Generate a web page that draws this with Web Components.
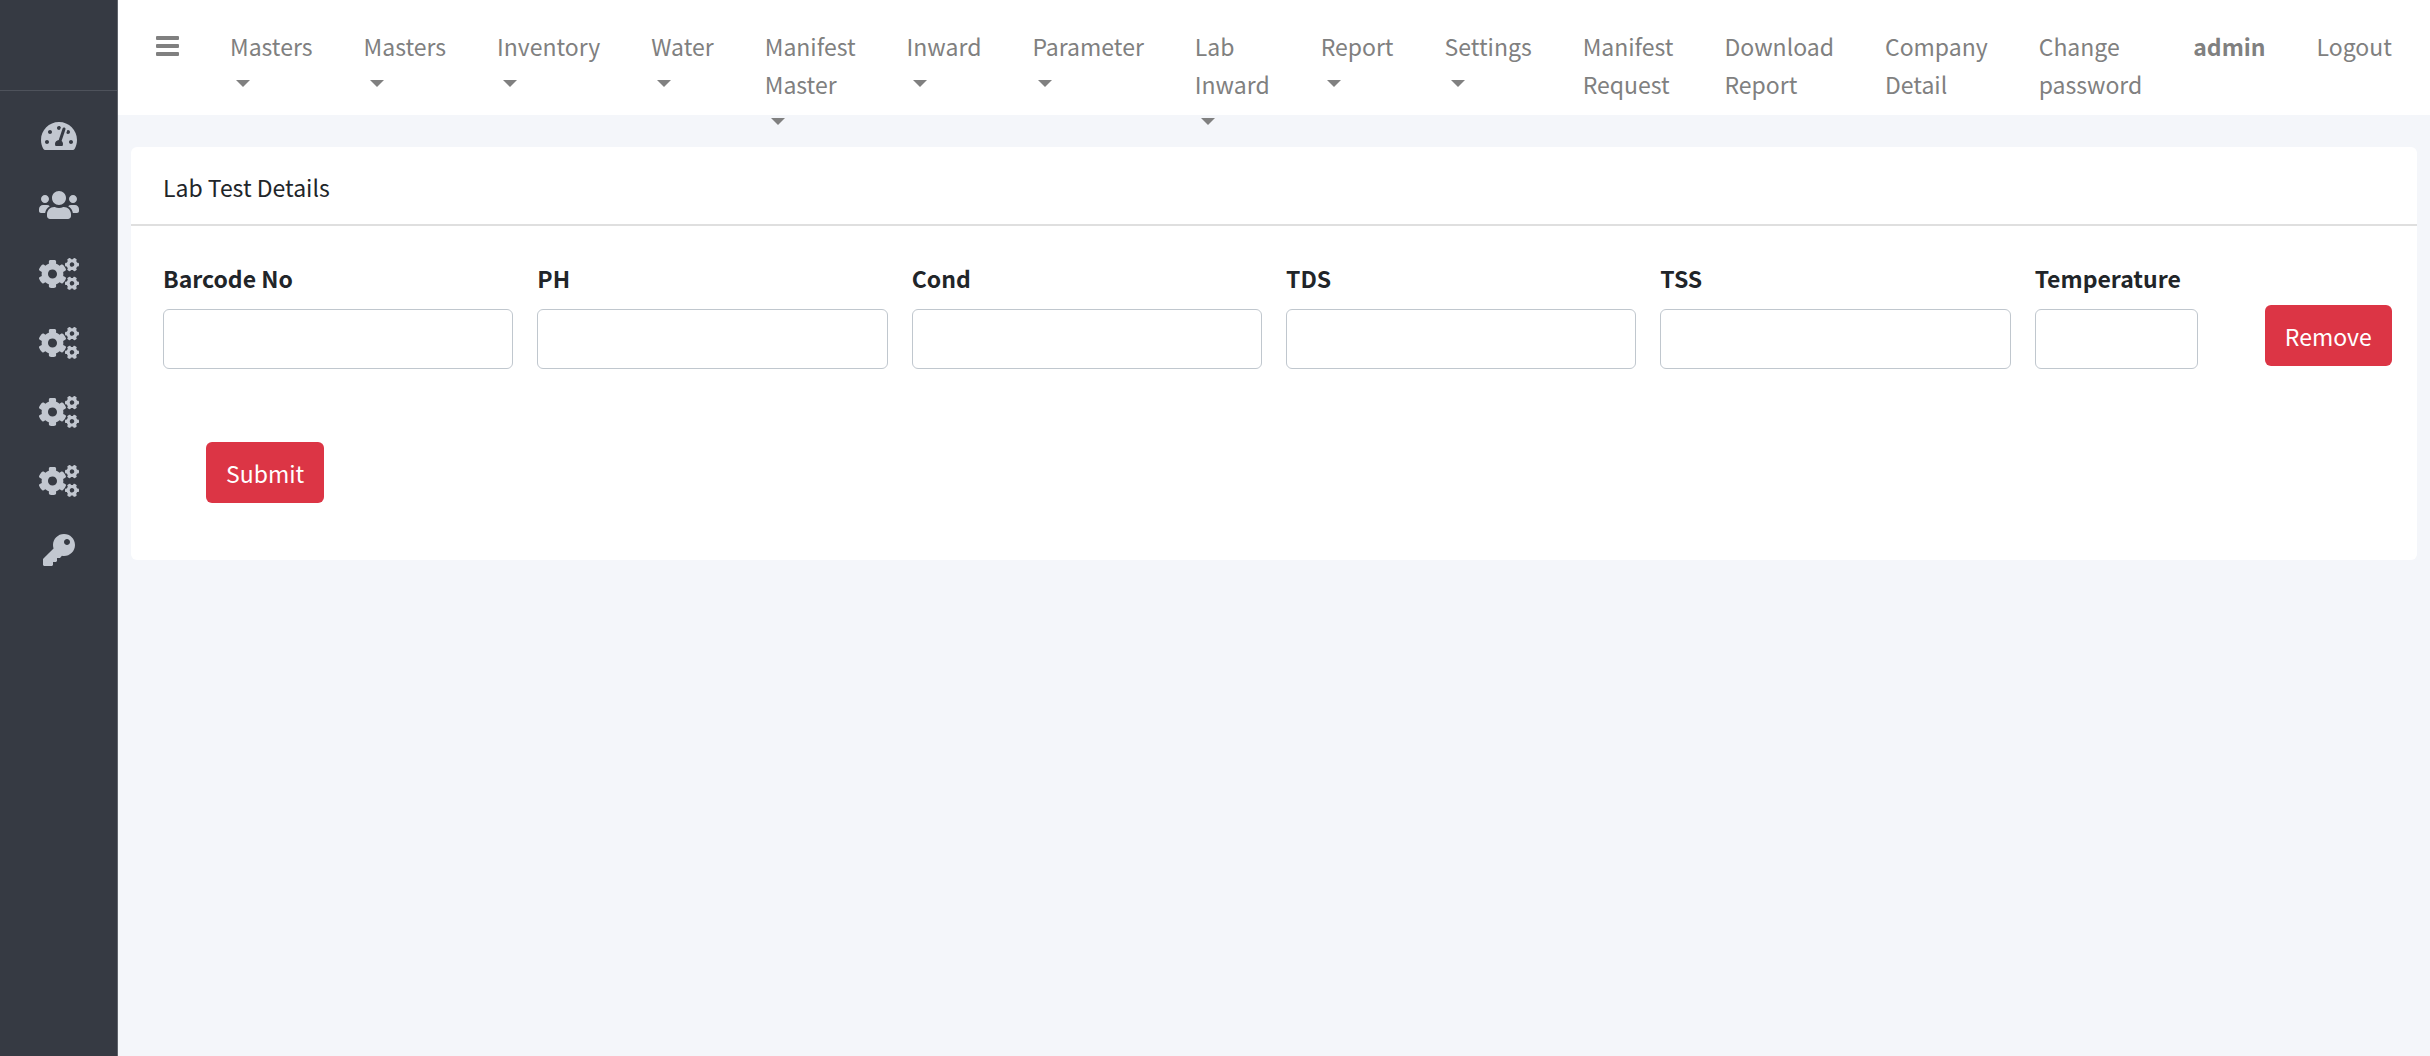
<!DOCTYPE html>
<html lang="en">
<head>
<meta charset="utf-8">
<title>Lab Test Details</title>
<style>
	body {
		margin: 0;
		min-height: 100vh;
		background: #f4f6fa;
		color: #212529;
		font-family: "Noto Sans CJK SC", "Noto Sans", sans-serif;
		font-size: 23px;
		line-height: 38px;
	}
</style>
</head>
<body>
<app-shell>
	<side-bar slot="side">
		<side-link icon="dashboard" label="Dashboard"></side-link>
		<side-link icon="users" label="Users"></side-link>
		<side-link icon="cogs" label="Masters"></side-link>
		<side-link icon="cogs" label="Inventory"></side-link>
		<side-link icon="cogs" label="Inward"></side-link>
		<side-link icon="cogs" label="Settings"></side-link>
		<side-link icon="key" label="Password"></side-link>
	</side-bar>
	<nav-bar slot="top">
		<nav-item dropdown>Masters</nav-item>
		<nav-item dropdown>Masters</nav-item>
		<nav-item dropdown>Inventory</nav-item>
		<nav-item dropdown>Water</nav-item>
		<nav-item dropdown>Manifest Master</nav-item>
		<nav-item dropdown>Inward</nav-item>
		<nav-item dropdown>Parameter</nav-item>
		<nav-item dropdown>Lab Inward</nav-item>
		<nav-item dropdown>Report</nav-item>
		<nav-item dropdown>Settings</nav-item>
		<nav-item>Manifest Request</nav-item>
		<nav-item>Download Report</nav-item>
		<nav-item>Company Detail</nav-item>
		<nav-item>Change password</nav-item>
		<nav-item strong>admin</nav-item>
		<nav-item>Logout</nav-item>
	</nav-bar>
	<app-card>
		<span slot="title">Lab Test Details</span>
		<lab-row>
			<text-field label="Barcode No"></text-field>
			<text-field label="PH"></text-field>
			<text-field label="Cond"></text-field>
			<text-field label="TDS"></text-field>
			<text-field label="TSS"></text-field>
			<text-field label="Temperature" small></text-field>
			<danger-button>Remove</danger-button>
		</lab-row>
		<danger-button>Submit</danger-button>
	</app-card>
</app-shell>

<script>
const icons = {
	dashboard: {
		width: 576,
		path: 'M288 32C128.94 32 0 160.94 0 320c0 52.8 14.25 102.26 39.06 144.8 5.61 9.62 16.3 15.2 27.44 15.2h443c11.14 0 21.83-5.58 27.44-15.2C561.75 422.26 576 372.8 576 320c0-159.06-128.94-288-288-288zm0 64c14.71 0 26.58 10.13 30.32 23.65-1.11 2.26-2.64 4.23-3.45 6.67l-9.22 27.67c-5.13 3.49-10.97 6.01-17.64 6.01-17.67 0-32-14.33-32-32S270.33 96 288 96zM96 384c-17.67 0-32-14.33-32-32s14.33-32 32-32 32 14.33 32 32-14.33 32-32 32zm48-160c-17.67 0-32-14.33-32-32s14.33-32 32-32 32 14.33 32 32-14.33 32-32 32zm246.77-72.41l-61.33 184C343.13 347.33 352 364.54 352 384c0 11.72-3.38 22.55-8.88 32H232.88c-5.5-9.45-8.88-20.28-8.88-32 0-33.94 26.5-61.43 59.9-63.59l61.34-184.01c4.17-12.56 17.73-19.45 30.36-15.17 12.57 4.19 19.35 17.79 15.17 30.36zm14.66 57.2l15.52-46.55c3.47-1.29 7.13-2.23 11.05-2.23 17.67 0 32 14.33 32 32s-14.33 32-32 32c-11.38-.01-20.89-6.28-26.57-15.22zM480 384c-17.67 0-32-14.33-32-32s14.33-32 32-32 32 14.33 32 32-14.33 32-32 32z'
	},
	users: {
		width: 640,
		path: 'M96 224c35.3 0 64-28.7 64-64s-28.7-64-64-64-64 28.7-64 64 28.7 64 64 64zm448 0c35.3 0 64-28.7 64-64s-28.7-64-64-64-64 28.7-64 64 28.7 64 64 64zm32 32h-64c-17.6 0-33.5 7.1-45.1 18.6 40.3 22.1 68.9 62 75.1 109.4h66c17.7 0 32-14.3 32-32v-32c0-35.3-28.7-64-64-64zm-256 0c61.9 0 112-50.1 112-112S381.9 32 320 32 208 82.1 208 144s50.1 112 112 112zm76.8 32h-8.3c-20.8 10-43.9 16-68.5 16s-47.6-6-68.5-16h-8.3C179.6 288 128 339.6 128 403.2V432c0 26.5 21.5 48 48 48h288c26.5 0 48-21.5 48-48v-28.8c0-63.6-51.6-115.2-115.2-115.2zm-223.7-13.4C161.5 263.1 145.6 256 128 256H64c-35.3 0-64 28.7-64 64v32c0 17.7 14.3 32 32 32h65.9c6.3-47.4 34.9-87.3 75.2-109.4z'
	},
	cogs: {
		width: 640,
		path: 'M512.1 191l-8.2 14.3c-3 5.3-9.4 7.5-15.1 5.4-11.8-4.4-22.6-10.7-32.1-18.6-4.6-3.8-5.8-10.5-2.8-15.7l8.2-14.3c-6.9-8-12.3-17.3-15.9-27.4h-16.5c-6 0-11.2-4.3-12.2-10.3-2-12-2.1-24.6 0-37.1 1-6 6.2-10.4 12.2-10.4h16.5c3.6-10.1 9-19.4 15.9-27.4l-8.2-14.3c-3-5.2-1.9-11.9 2.8-15.7 9.5-7.9 20.4-14.2 32.1-18.6 5.7-2.1 12.1.1 15.1 5.4l8.2 14.3c10.5-1.9 21.2-1.9 31.7 0L552 6.3c3-5.3 9.4-7.5 15.1-5.4 11.8 4.4 22.6 10.7 32.1 18.6 4.6 3.8 5.8 10.5 2.8 15.7l-8.2 14.3c6.9 8 12.3 17.3 15.9 27.4h16.5c6 0 11.2 4.3 12.2 10.3 2 12 2.1 24.6 0 37.1-1 6-6.2 10.4-12.2 10.4h-16.5c-3.6 10.1-9 19.4-15.9 27.4l8.2 14.3c3 5.2 1.9 11.9-2.8 15.7-9.5 7.9-20.4 14.2-32.1 18.6-5.7 2.1-12.1-.1-15.1-5.4l-8.2-14.3c-10.4 1.9-21.2 1.9-31.7 0zm-10.5-58.8c38.5 29.6 82.4-14.3 52.8-52.8-38.5-29.7-82.4 14.3-52.8 52.8zM386.3 286.1l33.7 16.8c10.1 5.8 14.5 18.1 10.5 29.1-8.9 24.2-26.4 46.4-42.6 65.8-7.4 8.9-20.2 11.1-30.3 5.3l-29.1-16.8c-16 13.7-34.6 24.6-54.9 31.7v33.6c0 11.6-8.3 21.6-19.7 23.6-24.6 4.2-50.4 4.4-75.9 0-11.5-2-20-11.9-20-23.6V418c-20.3-7.2-38.9-18-54.9-31.7L74 403c-10 5.8-22.9 3.6-30.3-5.3-16.2-19.4-33.3-41.6-42.2-65.7-4-10.9.4-23.2 10.5-29.1l33.3-16.8c-3.9-20.9-3.9-42.4 0-63.4L12 205.8c-10.1-5.8-14.6-18.1-10.5-29 8.9-24.2 26-46.4 42.2-65.8 7.4-8.9 20.2-11.1 30.3-5.3l29.1 16.8c16-13.7 34.6-24.6 54.9-31.7V57.1c0-11.5 8.2-21.5 19.6-23.5 24.6-4.2 50.5-4.4 76-.1 11.5 2 20 11.9 20 23.6v33.6c20.3 7.2 38.9 18 54.9 31.7l29.1-16.8c10-5.8 22.9-3.6 30.3 5.3 16.2 19.4 33.2 41.6 42.1 65.8 4 10.9.1 23.2-10 29.1l-33.7 16.8c3.9 21 3.9 42.5 0 63.5zm-117.6 21.1c59.2-77-28.7-164.9-105.7-105.7-59.2 77 28.7 164.9 105.7 105.7zm243.4 182.7l-8.2 14.3c-3 5.3-9.4 7.5-15.1 5.4-11.8-4.4-22.6-10.7-32.1-18.6-4.6-3.8-5.8-10.5-2.8-15.7l8.2-14.3c-6.9-8-12.3-17.3-15.9-27.4h-16.5c-6 0-11.2-4.3-12.2-10.3-2-12-2.1-24.6 0-37.1 1-6 6.2-10.4 12.2-10.4h16.5c3.6-10.1 9-19.4 15.9-27.4l-8.2-14.3c-3-5.2-1.9-11.9 2.8-15.7 9.5-7.9 20.4-14.2 32.1-18.6 5.7-2.1 12.1.1 15.1 5.4l8.2 14.3c10.5-1.9 21.2-1.9 31.7 0l8.2-14.3c3-5.3 9.4-7.5 15.1-5.4 11.8 4.4 22.6 10.7 32.1 18.6 4.6 3.8 5.8 10.5 2.8 15.7l-8.2 14.3c6.9 8 12.3 17.3 15.9 27.4h16.5c6 0 11.2 4.3 12.2 10.3 2 12 2.1 24.6 0 37.1-1 6-6.2 10.4-12.2 10.4h-16.5c-3.6 10.1-9 19.4-15.9 27.4l8.2 14.3c3 5.2 1.9 11.9-2.8 15.7-9.5 7.9-20.4 14.2-32.1 18.6-5.7 2.1-12.1-.1-15.1-5.4l-8.2-14.3c-10.4 1.9-21.2 1.9-31.7 0zM501.6 431c38.5 29.6 82.4-14.3 52.8-52.8-38.5-29.6-82.4 14.3-52.8 52.8z'
	},
	key: {
		width: 512,
		path: 'M512 176.001C512 273.203 433.202 352 336 352c-11.22 0-22.19-1.062-32.827-3.069l-24.012 27.014A23.999 23.999 0 0 1 261.223 384H224v40c0 13.255-10.745 24-24 24h-40v40c0 13.255-10.745 24-24 24H24c-13.255 0-24-10.745-24-24v-78.059c0-6.365 2.529-12.47 7.029-16.971l161.802-161.802C163.108 213.814 160 195.271 160 176 160 78.798 238.797.001 335.999 0 433.488-.001 512 78.511 512 176.001zM336 128c0 26.51 21.49 48 48 48s48-21.49 48-48-21.49-48-48-48-48 21.49-48 48z'
	}
}

class BaseElement extends HTMLElement {
	constructor(){
		super()
		this.attachShadow({mode: 'open'})
		this.shadowRoot.innerHTML = this.render()
	}
}

customElements.define('app-shell', class extends BaseElement {
	render(){
		return `
			<style>
				:host {
					display: grid;
					grid-template-columns: auto minmax(0, 1fr);
					min-height: 100vh;
				}

				main {
					padding: 32px 13px;
				}
			</style>
			<slot name="side"></slot>
			<div>
				<slot name="top"></slot>
				<main><slot></slot></main>
			</div>
		`
	}
})

customElements.define('side-bar', class extends BaseElement {
	render(){
		return `
			<style>
				:host {
					display: block;
					box-sizing: border-box;
					width: 118px;
					background: #363a43;
					border-right: 1px solid #60646c;
				}

				.brand {
					height: 90px;
					border-bottom: 1px solid #4e525b;
				}

				nav {
					display: flex;
					flex-direction: column;
					gap: 5px;
					padding-top: 13px;
				}
			</style>
			<div class="brand"></div>
			<nav><slot></slot></nav>
		`
	}
})

customElements.define('side-link', class extends BaseElement {
	render(){
		const icon = icons[this.getAttribute('icon')]
		return `
			<style>
				:host {
					display: block;
				}

				a {
					display: flex;
					align-items: center;
					justify-content: center;
					height: 64px;
					color: #c2c7d0;
				}

				svg {
					height: 32px;
					fill: currentColor;
				}
			</style>
			<a href="#" aria-label="${this.getAttribute('label')}">
				<svg viewBox="0 0 ${icon.width} 512"><path d="${icon.path}"/></svg>
			</a>
		`
	}
})

customElements.define('nav-bar', class extends BaseElement {
	render(){
		return `
			<style>
				/* three-line items are allowed to hang below the bar */
				:host {
					display: flex;
					box-sizing: border-box;
					height: 115px;
					padding: 27px 38px 0;
					background: #fff;
				}

				nav {
					display: flex;
					flex: 1;
					justify-content: space-between;
				}

				button {
					display: block;
					width: 23px;
					height: 38px;
					padding: 0;
					border: 0;
					background: none;
					color: #808080;
				}

				svg {
					display: block;
					width: 23px;
					fill: currentColor;
				}
			</style>
			<nav>
				<button type="button" aria-label="Menu">
					<svg viewBox="0 0 23 20"><rect width="23" height="4" rx="1"/><rect y="8" width="23" height="4" rx="1"/><rect y="16" width="23" height="4" rx="1"/></svg>
				</button>
				<slot></slot>
			</nav>
		`
	}
})

customElements.define('nav-item', class extends BaseElement {
	render(){
		const caret = this.hasAttribute('dropdown') ? ' <i></i>' : ''
		return `
			<style>
				:host {
					display: block;
					width: min-content;
				}

				:host([strong]) {
					font-weight: 700;
				}

				a {
					color: #808080;
					text-decoration: none;
				}

				i {
					display: inline-block;
					margin-left: 6px;
					vertical-align: 7px;
					border-top: 7px solid;
					border-right: 7px solid transparent;
					border-left: 7px solid transparent;
				}
			</style>
			<a href="#"><slot></slot>${caret}</a>
		`
	}
})

customElements.define('app-card', class extends BaseElement {
	render(){
		return `
			<style>
				:host {
					display: block;
					background: #fff;
					border-radius: 6px;
				}

				header {
					padding: 21px 32px 18px;
					border-bottom: 2px solid #dfdfdf;
				}

				.body {
					display: flex;
					flex-direction: column;
					padding: 33px 32px 57px;
				}
			</style>
			<header><slot name="title"></slot></header>
			<div class="body"><slot></slot></div>
		`
	}
})

customElements.define('lab-row', class extends BaseElement {
	render(){
		return `
			<style>
				:host {
					display: grid;
					grid-template-columns: repeat(12, minmax(0, 1fr));
					gap: 24px;
					margin-bottom: 27px;
				}
			</style>
			<slot></slot>
		`
	}
})

customElements.define('text-field', class extends BaseElement {
	render(){
		return `
			<style>
				:host {
					display: block;
					grid-column: span 2;
				}

				:host([small]) {
					grid-column: span 1;
				}

				label {
					display: block;
					margin-bottom: 12px;
					font-weight: 700;
				}

				input {
					display: block;
					box-sizing: border-box;
					width: 100%;
					height: 60px;
					padding: 10px 20px;
					border: 1px solid #c0c7ce;
					border-radius: 6px;
					background: #fff;
					color: #495057;
					font: inherit;
				}
			</style>
			<label for="field">${this.getAttribute('label')}</label>
			<input id="field" type="text">
		`
	}
})

customElements.define('danger-button', class extends BaseElement {
	render(){
		return `
			<style>
				:host {
					display: block;
					margin-top: 46px;
					margin-left: 43px;
				}

				button {
					display: block;
					padding: 12px 20px 11px;
					border: 0;
					border-radius: 6px;
					background: #dc3545;
					color: #fff;
					font: inherit;
				}
			</style>
			<button type="button"><slot></slot></button>
		`
	}
})
</script>
</body>
</html>
